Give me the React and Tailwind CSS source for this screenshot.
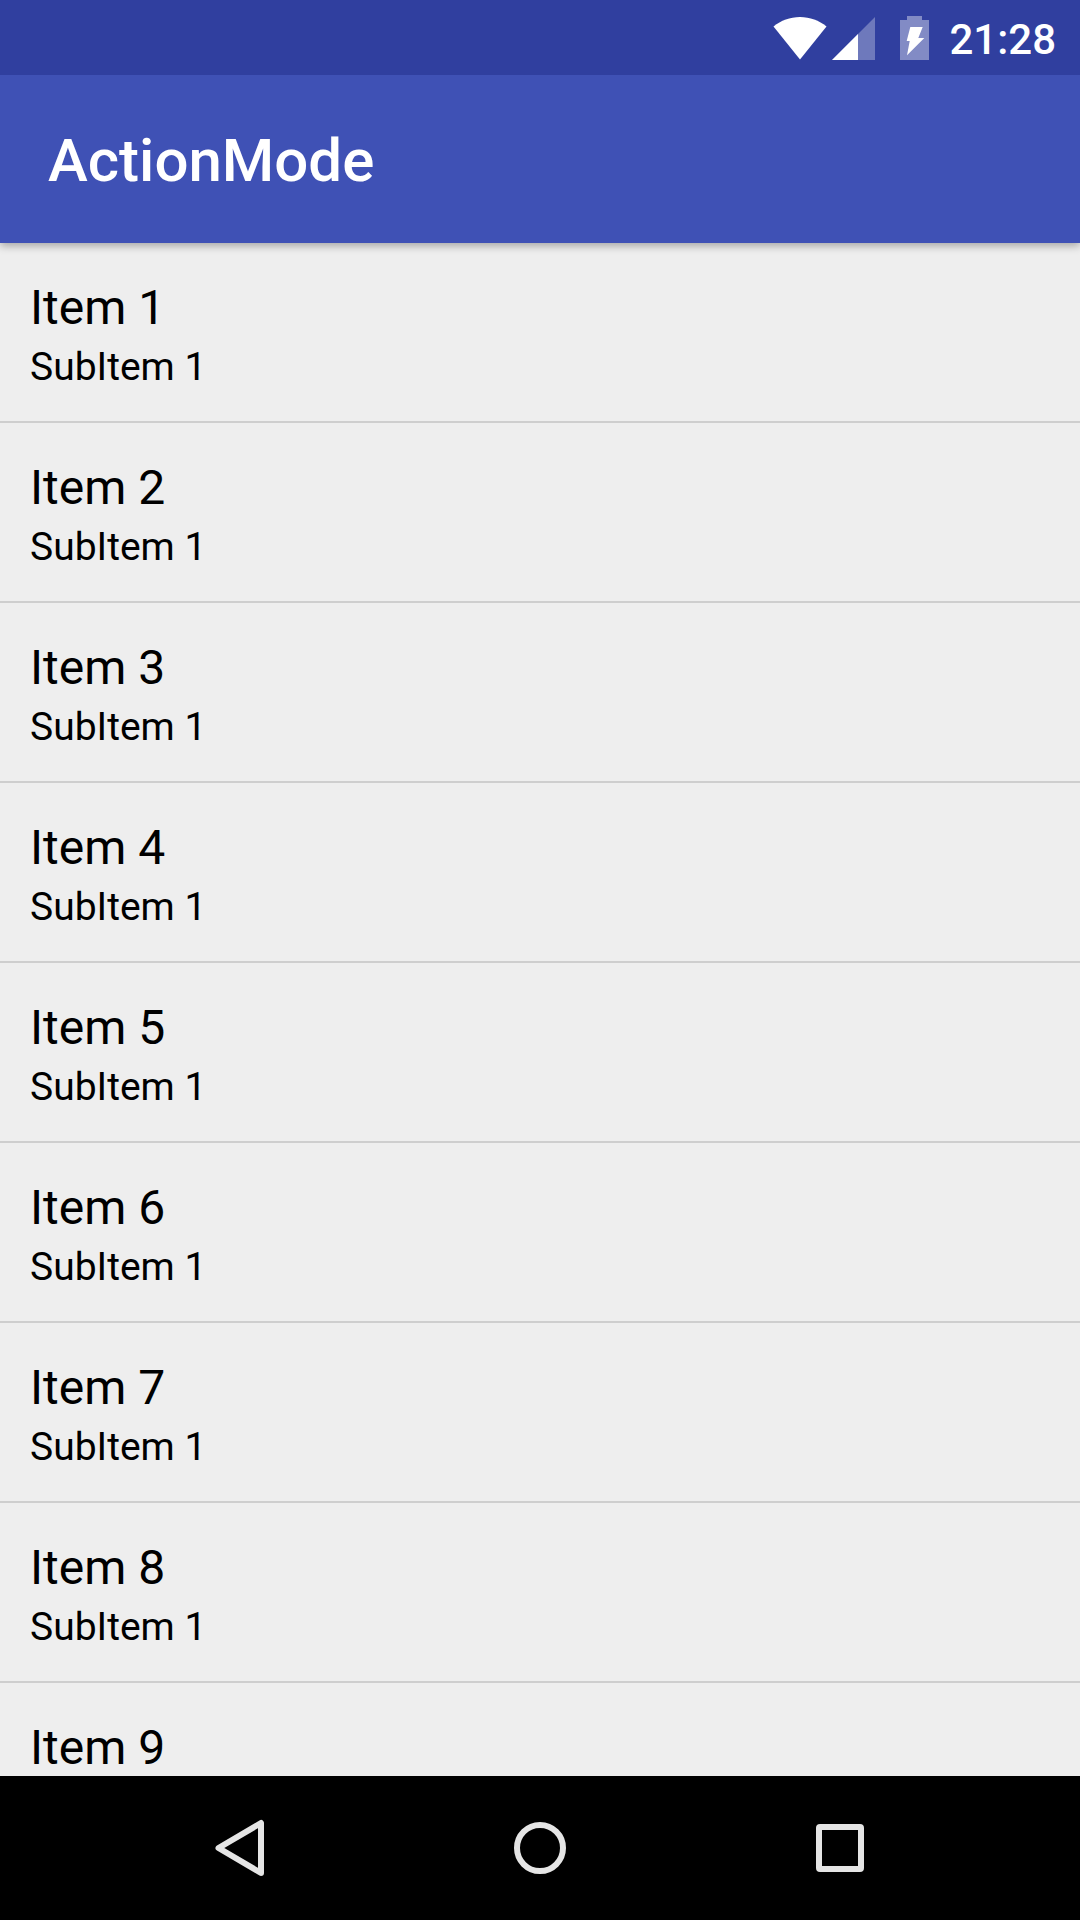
const items = [
  { title: "Item 1", subtitle: "SubItem 1" },
  { title: "Item 2", subtitle: "SubItem 1" },
  { title: "Item 3", subtitle: "SubItem 1" },
  { title: "Item 4", subtitle: "SubItem 1" },
  { title: "Item 5", subtitle: "SubItem 1" },
  { title: "Item 6", subtitle: "SubItem 1" },
  { title: "Item 7", subtitle: "SubItem 1" },
  { title: "Item 8", subtitle: "SubItem 1" },
  { title: "Item 9" },
];

function StatusBar() {
  return (
    <div className="relative z-20 flex h-[75px] shrink-0 items-center justify-end bg-[#303f9f] pr-6 text-white">
      <svg className="h-[44px] w-[54px]" viewBox="0 0 54 44" fill="currentColor" aria-hidden="true">
        <path d="M27 43.500 0.500 10.500C8 4.500 17 1 27 1s19 3.500 26.500 9.500z" />
      </svg>
      <svg className="ml-[5px] h-[44px] w-[43px]" viewBox="0 0 43 44" aria-hidden="true">
        <path d="M43 1v43H0z" fill="#fff" fillOpacity="0.3" />
        <path d="M26 18v26H0z" fill="#fff" />
      </svg>
      <svg className="ml-[25px] h-[44px] w-[29px]" viewBox="0 0 29 44" aria-hidden="true">
        <path d="M7 0h15v4h7v40H0V4h7z" fill="#fff" fillOpacity="0.4" />
        <path d="M10.300 11h12.400l-4.400 11h6L7 39.300 9.700 25h-3z" fill="#fff" />
      </svg>
      <span className="ml-5 pt-1 text-[42px] leading-[48px] font-medium">21:28</span>
    </div>
  );
}

function Item({ title, subtitle }) {
  return (
    <li className="h-[180px] border-b-2 border-[#cecece] pt-[36px] pl-[30px]">
      <h2 className="text-[48px] leading-[57px]">{title}</h2>
      {subtitle && <p className="text-[39px] leading-[62px]">{subtitle}</p>}
    </li>
  );
}

function NavButton({ label, children }) {
  return (
    <button aria-label={label} className="flex size-[144px] items-center justify-center">
      <svg className="size-[60px]" viewBox="0 0 60 60" fill="none" stroke="currentColor" strokeWidth="6" strokeLinejoin="round" aria-hidden="true">
        {children}
      </svg>
    </button>
  );
}

export default function App() {
  return (
    <div className="flex h-screen flex-col overflow-hidden bg-[#eeeeee] font-['Roboto',sans-serif] text-black">
      <StatusBar />
      <header className="relative z-10 flex h-[168px] shrink-0 items-center bg-[#3f51b5] pt-1 pl-12 text-white shadow-[0_3px_8px_rgba(0,0,0,0.3)]">
        <h1 className="text-[60px] leading-[72px] font-medium">ActionMode</h1>
      </header>
      <ul className="min-h-0 flex-1 overflow-hidden">
        {items.map((item) => (
          <Item key={item.title} {...item} />
        ))}
      </ul>
      <nav className="flex h-[144px] shrink-0 items-center justify-center gap-[156px] bg-black text-[#e5e5e5]">
        <NavButton label="Back">
          <path d="M51 5v50L8.500 30z" />
        </NavButton>
        <NavButton label="Home">
          <circle cx="30" cy="30" r="23" />
        </NavButton>
        <NavButton label="Recent apps">
          <rect x="9" y="9" width="42" height="42" rx="1" />
        </NavButton>
      </nav>
    </div>
  );
}
